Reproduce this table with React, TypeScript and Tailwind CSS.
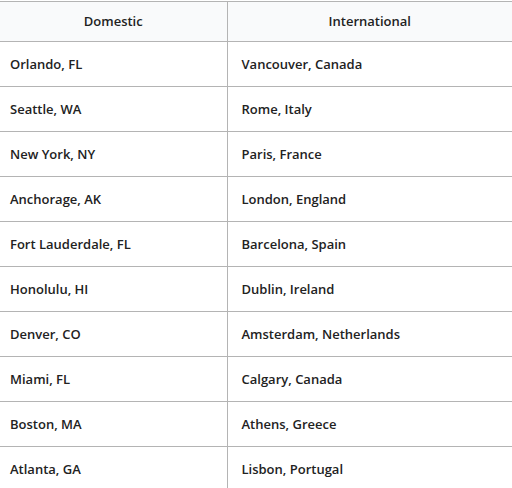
import React from 'react';

const rows: [string, string][] = [
  ['Orlando, FL', 'Vancouver, Canada'],
  ['Seattle, WA', 'Rome, Italy'],
  ['New York, NY', 'Paris, France'],
  ['Anchorage, AK', 'London, England'],
  ['Fort Lauderdale, FL', 'Barcelona, Spain'],
  ['Honolulu, HI', 'Dublin, Ireland'],
  ['Denver, CO', 'Amsterdam, Netherlands'],
  ['Miami, FL', 'Calgary, Canada'],
  ['Boston, MA', 'Athens, Greece'],
  ['Atlanta, GA', 'Lisbon, Portugal'],
];

export default function App() {
  return (
    <div className="w-[512px] h-[488px] overflow-hidden bg-white pt-px font-['Open_Sans',sans-serif] text-[13px] font-semibold text-[#222]">
      <table className="w-full border-collapse table-fixed">
        <colgroup>
          <col className="w-[227px]" />
          <col />
        </colgroup>
        <thead>
          <tr className="h-10 bg-[#f9fafb] border-t border-b border-[#b4b4b4]">
            <th className="font-semibold text-center border-r border-[#b4b4b4]">Domestic</th>
            <th className="font-semibold text-center">International</th>
          </tr>
        </thead>
        <tbody>
          {rows.map(([d, i]) => (
            <tr key={d} className="h-[45px] border-b border-[#b4b4b4]">
              <td className="px-2.5 pt-0.5 border-r border-[#b4b4b4]">{d}</td>
              <td className="px-[14px] pt-0.5">{i}</td>
            </tr>
          ))}
        </tbody>
      </table>
    </div>
  );
}
